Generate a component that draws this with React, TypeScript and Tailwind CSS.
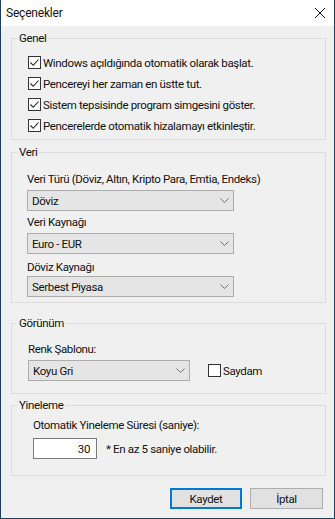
import * as React from "react";

const GENEL = [
  "Windows açıldığında otomatik olarak başlat.",
  "Pencereyi her zaman en üstte tut.",
  "Sistem tepsisinde program simgesini göster.",
  "Pencerelerde otomatik hizalamayı etkinleştir.",
];

const CheckBox = ({ checked }: { checked: boolean }) => (
  <div className="w-[13px] h-[13px] shrink-0 border border-[#333333] bg-white flex items-center justify-center">
    {checked && (
      <svg width="11" height="11" viewBox="0 0 11 11" fill="none">
        <path d="M1.5 5.5 L4.2 8.3 L9.5 2.5" stroke="#222" strokeWidth="1.1" />
      </svg>
    )}
  </div>
);

const Combo = ({ value, className }: { value: string; className: string }) => (
  <div className={"h-[21px] flex items-center justify-between bg-[#e5e5e5] border border-[#adadad] pl-[4px] pr-[4px] " + className}>
    <span>{value}</span>
    <svg width="9" height="5" viewBox="0 0 9 5" fill="none">
      <path d="M0.5 0.5 L4.5 4.5 L8.5 0.5" stroke="#707070" strokeWidth="1" />
    </svg>
  </div>
);

const Group = ({ title, className, children }: { title: string; className: string; children: React.ReactNode }) => (
  <fieldset className={"border border-[#dcdcdc] w-[315px] " + className}>
    <legend className="ml-[5px] px-[2px] leading-[16px]">{title}</legend>
    {children}
  </fieldset>
);

export default function App() {
  return (
    <div className="w-[335px] h-[519px] flex flex-col bg-[#f0f0f0] border-x border-b border-[#1f3d5c] font-['Roboto',sans-serif] text-[11.5px] tracking-[-0.35px] leading-[16px] text-[#111] overflow-hidden">
      {/* title bar */}
      <div className="h-[26px] shrink-0 bg-white flex items-center justify-between pl-[5px] pr-[9px]">
        <span className="text-[12px] tracking-[-0.2px]">Seçenekler</span>
        <svg width="10" height="10" viewBox="0 0 10 10" fill="none">
          <path d="M0 0 L10 10 M10 0 L0 10" stroke="#111" strokeWidth="1" />
        </svg>
      </div>

      <div className="flex flex-col pl-[10px] pr-[8px]">
        <Group title="Genel" className="mt-[4px] pt-[6px] pb-[3px]">
          {GENEL.map((t, i) => (
            <div key={i} className="h-[21px] flex items-center pl-[16px]">
              <CheckBox checked />
              <span className="ml-[2px] whitespace-nowrap">{t}</span>
            </div>
          ))}
        </Group>

        <Group title="Veri" className="mt-[4px] pb-[5px]">
          <div className="pl-[15px] flex flex-col">
            <div className="mt-[11px]">Veri Türü (Döviz, Altın, Kripto Para, Emtia, Endeks)</div>
            <Combo value="Döviz" className="mt-[3px] w-[207px]" />
            <div className="mt-[3px]">Veri Kaynağı</div>
            <Combo value="Euro - EUR" className="mt-[3px] w-[207px]" />
            <div className="mt-[5px]">Döviz Kaynağı</div>
            <Combo value="Serbest Piyasa" className="mt-[1px] w-[207px]" />
          </div>
        </Group>

        <Group title="Görünüm" className="mt-[12px] pb-[12px]">
          <div className="pl-[16px]">
            <div className="mt-[10px]">Renk Şablonu:</div>
            <div className="mt-[3px] flex items-center">
              <Combo value="Koyu Gri" className="w-[162px]" />
              <div className="ml-[18px] flex items-center">
                <CheckBox checked={false} />
                <span className="ml-[2px]">Saydam</span>
              </div>
            </div>
          </div>
        </Group>

        <Group title="Yineleme" className="mt-[3px] pb-[16px]">
          <div className="pl-[21px]">
            <div className="mt-[4px]">Otomatik Yineleme Süresi (saniye):</div>
            <div className="mt-[5px] flex items-center">
              <div className="w-[64px] h-[21px] bg-white border border-[#7a7a7a] flex items-center justify-end pr-[6px]">30</div>
              <span className="ml-[9px]">* En az 5 saniye olabilir.</span>
            </div>
          </div>
        </Group>

        <div className="mt-[12px] flex justify-end gap-[8px] pr-[3px]">
          <button className="w-[72px] h-[21px] bg-[#e1e1e1] border-2 border-[#0078d7] flex items-center justify-center">Kaydet</button>
          <button className="w-[73px] h-[21px] bg-[#e1e1e1] border border-[#adadad] flex items-center justify-center">İptal</button>
        </div>
      </div>
    </div>
  );
}
